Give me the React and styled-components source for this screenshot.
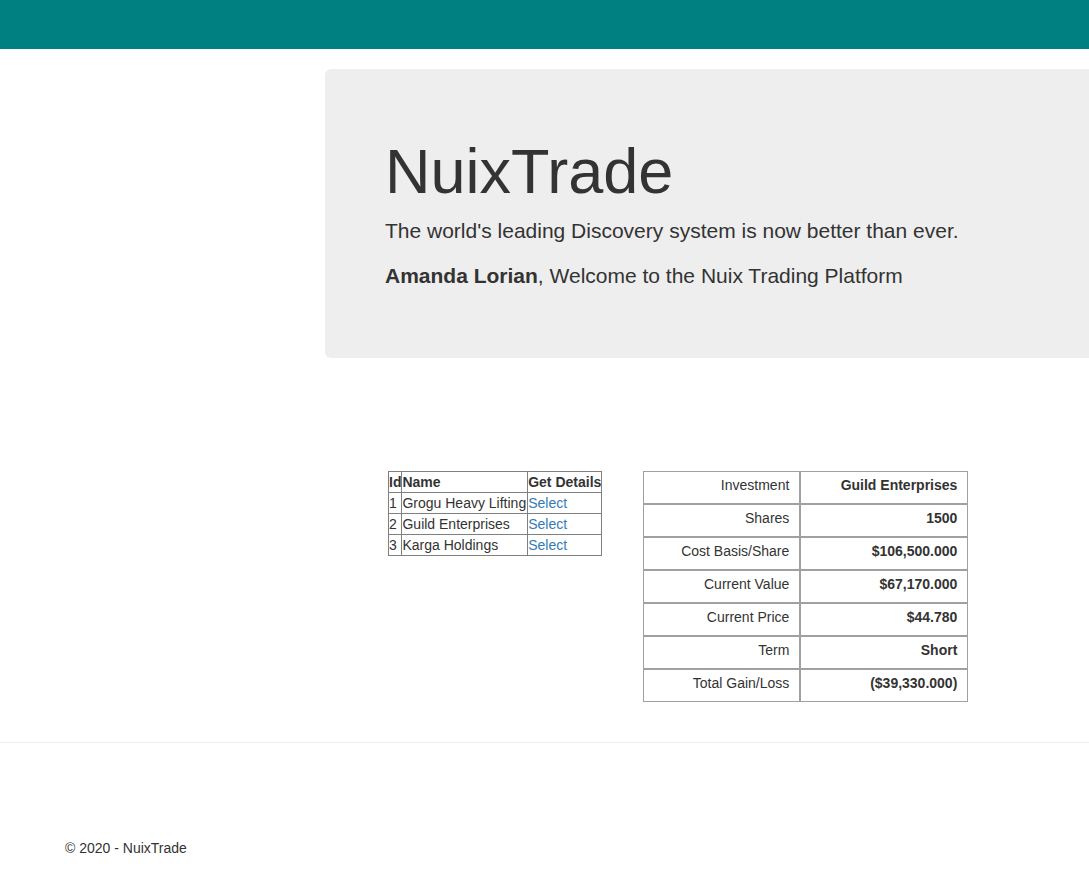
import React from 'react';
import styled, { createGlobalStyle } from 'styled-components';

const GlobalStyle = createGlobalStyle`
  html, body {
    margin: 0;
    padding: 0;
    overflow-x: hidden;
  }
  body {
    font-family: "Liberation Sans", "Helvetica Neue", Arial, sans-serif;
    font-size: 14px;
    line-height: 1.42857;
    color: #333;
    background: #fff;
  }
`;

const Navbar = styled.nav`
  height: 49px;
  background-color: #008080;
  margin-bottom: 20px;
`;

const Main = styled.main`
  padding-left: 325px;
  overflow: hidden;
`;

/* the jumbotron runs past the right edge of the window, as in the live page */
const Jumbotron = styled.section`
  width: 970px;
  box-sizing: border-box;
  background-color: #eee;
  border-radius: 6px;
  padding: 48px 60px 52px;
`;

const Title = styled.h1`
  font-size: 63px;
  font-weight: 500;
  line-height: 1.1;
  margin: 20px 0 10px;
  color: #333;
`;

const Lead = styled.p`
  font-size: 21px;
  line-height: 30px;
  margin: 0 0 15px;
`;

const TablesRow = styled.div`
  display: flex;
  align-items: flex-start;
  gap: 41px;
  margin-top: 112px;
  padding-left: 388px;
`;

const CompanyTable = styled.table`
  border-collapse: collapse;
  margin-top: 1px;
  th, td {
    border: 1px solid #808080;
    padding: 0;
    line-height: 20px;
    text-align: left;
    white-space: nowrap;
  }
  th {
    font-weight: bold;
  }
  td:nth-child(2) {
    padding-right: 1px;
  }
`;

const SelectLink = styled.a`
  color: #337ab7;
  text-decoration: none;
  cursor: pointer;
`;

const DetailTable = styled.table`
  border-collapse: separate;
  border-spacing: 0;
  margin-top: 1px;
  td {
    border: 1px solid #a0a0a0;
    padding: 3px 10px 8px;
    line-height: 20px;
    text-align: right;
    white-space: nowrap;
  }
`;

const LabelCell = styled.td`
  width: 135px;
`;

const ValueCell = styled.td`
  width: 146px;
  font-weight: bold;
`;

const Rule = styled.hr`
  margin: 40px 0 0;
  border: 0;
  border-top: 1px solid #eee;
`;

const Footer = styled.footer`
  padding: 96px 0 20px 65px;
`;

const companies = [
  { id: 1, name: 'Grogu Heavy Lifting' },
  { id: 2, name: 'Guild Enterprises' },
  { id: 3, name: 'Karga Holdings' },
];

const details = [
  ['Investment', 'Guild Enterprises'],
  ['Shares', '1500'],
  ['Cost Basis/Share', '$106,500.000'],
  ['Current Value', '$67,170.000'],
  ['Current Price', '$44.780'],
  ['Term', 'Short'],
  ['Total Gain/Loss', '($39,330.000)'],
];

const App = () => {
  return (
    <>
      <GlobalStyle />
      <Navbar />
      <Main>
        <Jumbotron>
          <Title>NuixTrade</Title>
          <Lead>The world's leading Discovery system is now better than ever.</Lead>
          <Lead><strong>Amanda Lorian</strong>, Welcome to the Nuix Trading Platform</Lead>
        </Jumbotron>
      </Main>

      <TablesRow>
        <CompanyTable>
          <thead>
            <tr>
              <th>Id</th>
              <th>Name</th>
              <th>Get Details</th>
            </tr>
          </thead>
          <tbody>
            {companies.map(c => (
              <tr key={c.id}>
                <td>{c.id}</td>
                <td>{c.name}</td>
                <td><SelectLink>Select</SelectLink></td>
              </tr>
            ))}
          </tbody>
        </CompanyTable>

        <DetailTable>
          <tbody>
            {details.map(([label, value]) => (
              <tr key={label}>
                <LabelCell>{label}</LabelCell>
                <ValueCell>{value}</ValueCell>
              </tr>
            ))}
          </tbody>
        </DetailTable>
      </TablesRow>

      <Rule />
      <Footer>© 2020 - NuixTrade</Footer>
    </>
  );
};

export default App;
